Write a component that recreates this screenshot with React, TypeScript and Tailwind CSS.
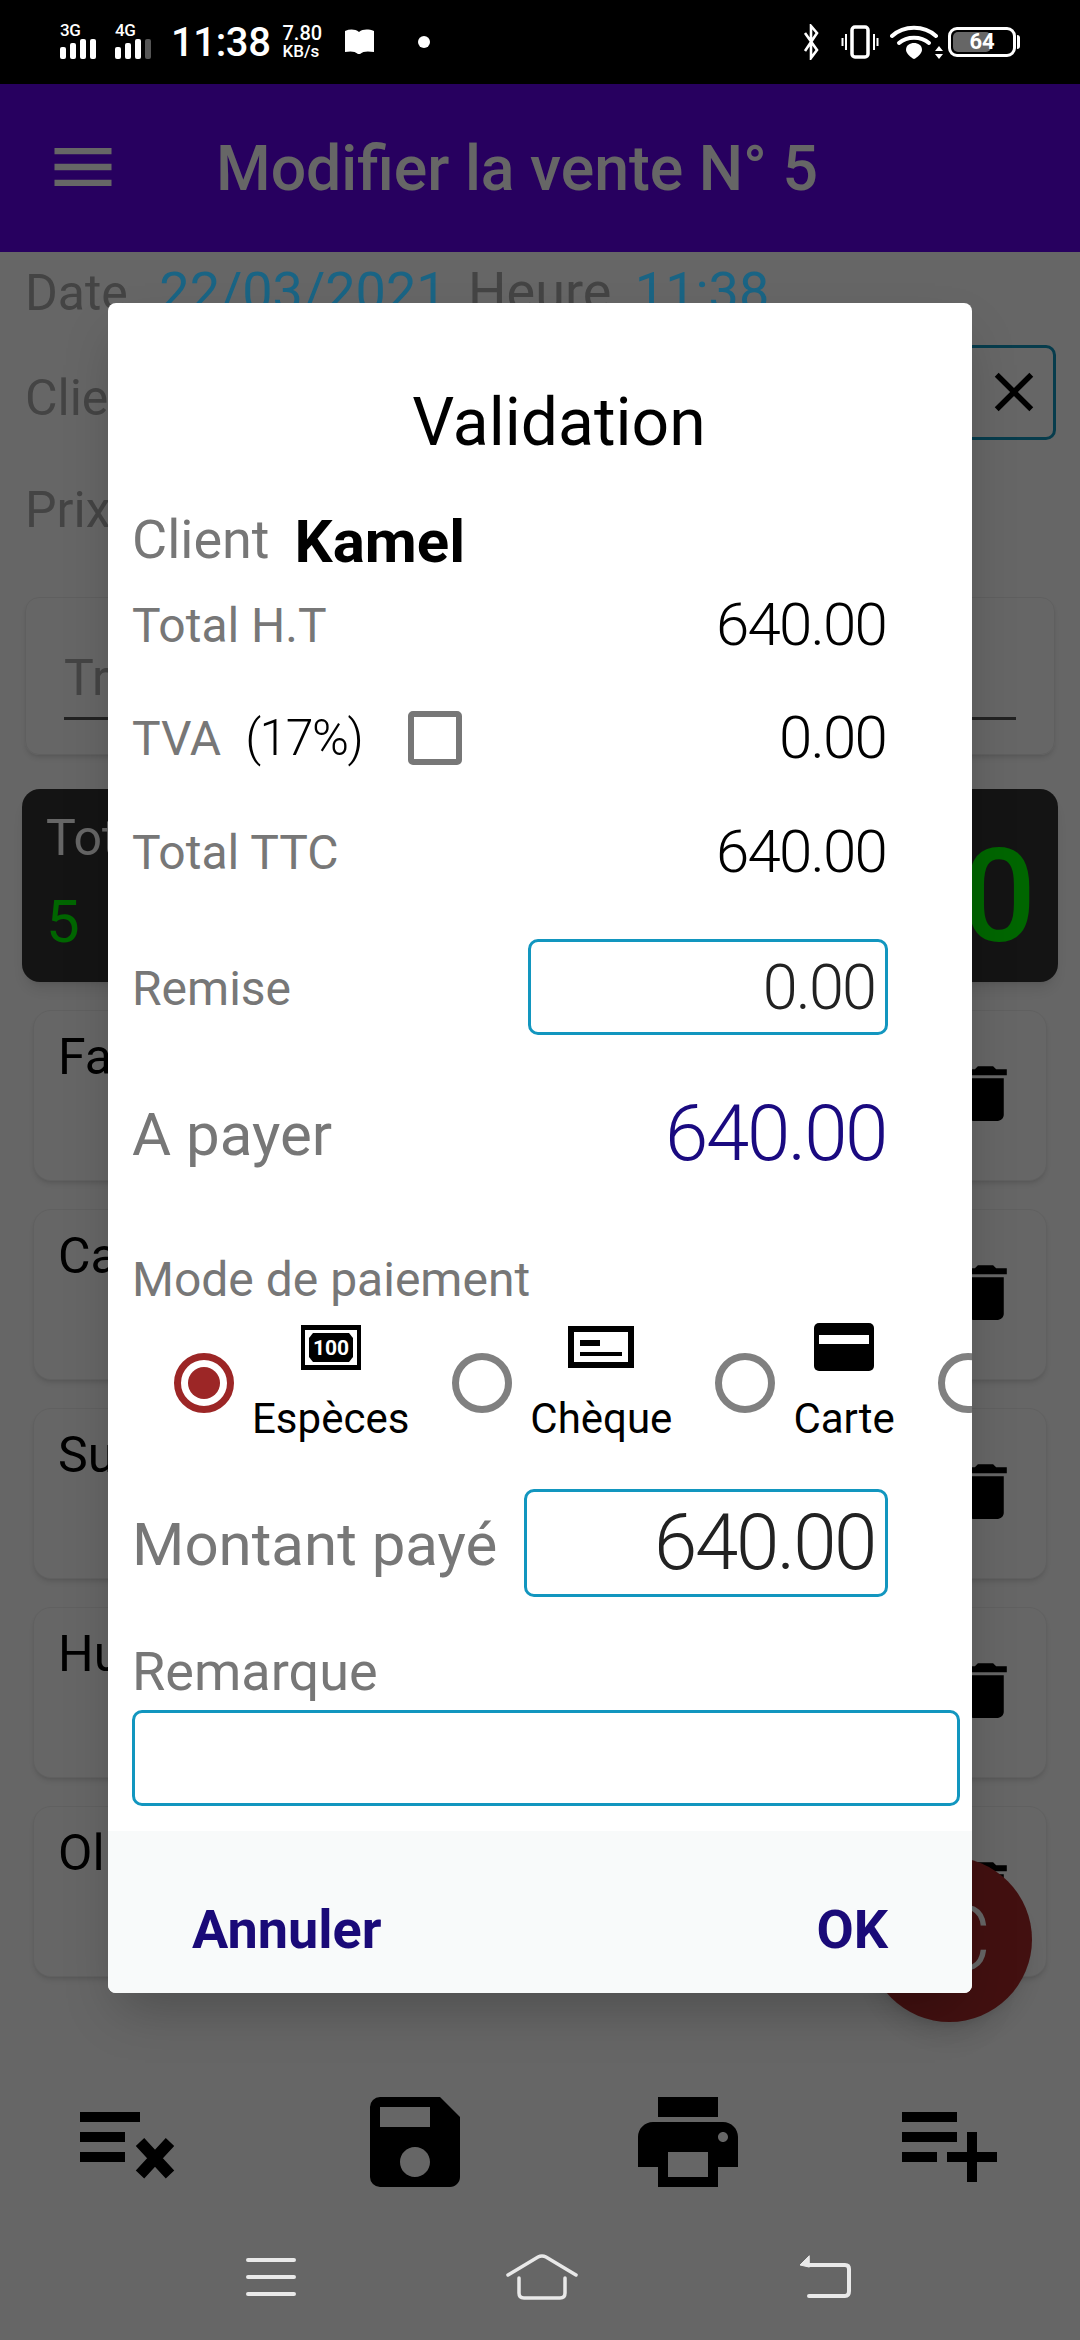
import React from "react";
import { MdDelete, MdSave, MdPrint, MdPlaylistAdd, MdClose, MdMenu } from "react-icons/md";

const font = "font-['Roboto','Liberation_Sans',sans-serif]";

function Signal({ label, last }: { label: string; last?: boolean }) {
  const hs = [12, 16, 20, 20];
  return (
    <div className="flex flex-col items-start w-[46px]">
      <span className="text-[17px] leading-[16px] font-medium text-white tracking-[-0.5px]">{label}</span>
      <div className="flex items-end gap-[4px] h-[21px]">
        {hs.map((h, i) => (
          <div key={i} style={{ height: h }} className={`w-[6px] rounded-[2px] ${last && i === 3 ? "bg-[#555]" : "bg-white"}`} />
        ))}
      </div>
    </div>
  );
}

function StatusBar() {
  return (
    <div className="relative z-[20] h-[84px] bg-black flex items-center pl-[60px] pr-[60px] text-white shrink-0">
      <div className="mt-[-4px]"><Signal label="3G" /></div>
      <div className="ml-[9px] mt-[-4px]"><Signal label="4G" last /></div>
      <span className="ml-[10px] text-[40px] leading-[38px] font-medium mt-[1px] tracking-[-0.4px]">11:38</span>
      <div className="ml-[12px] flex flex-col text-[20px] leading-[18px] font-medium">
        <span>7.80</span>
        <span className="text-[17px]">KB/s</span>
      </div>
      <svg className="ml-[22px]" width="31" height="26" viewBox="0 0 31 26">
        <path d="M1 2c5-2 10-2 14 1 4-3 9-3 15-1v21c-6-1-11-1-14 2h-2c-3-3-8-3-13-2z" fill="#fff" />
      </svg>
      <div className="ml-[43px] w-[12px] h-[12px] rounded-full bg-white" />
      <div className="ml-auto flex items-center">
        <svg width="16" height="36" viewBox="0 0 14 36" fill="none" stroke="#fff" strokeWidth="2.6">
          <path d="M1 9l12 17-6 8V2l6 7L1 27" />
        </svg>
        <svg className="ml-[22px]" width="38" height="34" viewBox="0 0 38 34" fill="none" stroke="#fff" strokeWidth="3">
          <rect x="11" y="2" width="16" height="30" rx="3" strokeWidth="3.500" />
          <path d="M5 9v16M1.500 13v8M33 9v16M36.500 13v8" strokeWidth="2" />
        </svg>
        <svg className="ml-[11px]" width="55" height="34" viewBox="0 0 55 34">
          <g fill="none" stroke="#fff" strokeWidth="4" strokeLinecap="round">
            <path d="M2 11c12-11 32-11 44 0" />
            <path d="M9 18c8-7 22-7 30 0" />
          </g>
          <path d="M24 18c4 0 8 2 8 7 0 3-5 8-8 9-3-1-8-6-8-9 0-5 4-7 8-7z" fill="#fff" />
          <path d="M49 21l4 5h-8zM49 34l4-5h-8z" fill="#fff" />
        </svg>
        <div className="ml-[3px] relative w-[68px] h-[30px] rounded-[9px] border-[3px] border-white overflow-hidden bg-black flex items-center justify-center">
          <div className="absolute left-[2px] top-[2px] bottom-[2px] w-[38px] rounded-[5px] bg-[#666]" />
          <span className="relative text-[22px] leading-[22px] font-bold">64</span>
        </div>
        <div className="ml-[1px] w-[3px] h-[14px] rounded-r bg-white" />
      </div>
    </div>
  );
}

function Header() {
  return (
    <div className="h-[168px] bg-[#6200ee] flex items-center text-white shrink-0">
      <MdMenu className="ml-[45px] w-[76px] h-[76px] mt-[-2px] shrink-0" />
      <span className="ml-[95px] text-[62.5px] font-medium leading-none mt-[2px]">Modifier la vente N° 5</span>
    </div>
  );
}

const items = ["Farine", "Café", "Sucre", "Huile", "Olives"];

function Background() {
  return (
    <div className="flex-1 bg-white flex flex-col">
      <div className="relative z-[2] h-[52px] pl-[25px] pt-[11px] text-[50px] leading-[58px] whitespace-nowrap text-[#444]">
        Date <span className="ml-[19px] text-[54px] text-[#1a6484]">22/03/2021</span>{" "}
        <span className="ml-[9px] text-[54px]">Heure</span>{" "}
        <span className="ml-[11px] text-[54px] text-[#1a6484]">11:38</span>
      </div>
      <div className="h-[176px] pl-[25px] flex items-center justify-between pr-[24px]">
        <span className="mt-[12px] text-[50px] text-[#aaaaaa]">Client</span>
        <div className="w-[120px] h-[95px] rounded-[10px] border-[3px] border-[#1296bf] flex items-center justify-end pr-[6px]">
          <MdClose className="w-[66px] h-[66px] text-black" />
        </div>
      </div>
      <div className="h-[60px] pl-[25px] flex items-center text-[50px] text-[#aaaaaa]">Prix</div>
      <div className="mx-[25px] mt-[57px] h-[158px] rounded-[14px] border border-[#eee] shadow-md px-[38px] pt-[52px]">
        <div className="border-b-[3px] border-[#555] h-[70px] text-[50px] leading-[56px] text-[#aaaaaa]">Trouver</div>
      </div>
      <div className="mx-[22px] mt-[34px] h-[193px] rounded-[18px] bg-[#333] shadow-lg flex flex-col pl-[24px] relative">
        <span className="mt-[20px] text-[50px] leading-[58px] text-white">Total</span>
        <span className="mt-[20px] text-[60px] leading-[70px] text-[#00ff00]">5</span>
        <span className="absolute right-[22px] top-[43px] text-[130px] leading-[130px] font-medium text-[#00ff00]">640.00</span>
      </div>
      <div className="mx-[33px] mt-[28px] flex flex-col gap-[28px]">
        {items.map((t) => (
          <div key={t} className="h-[171px] rounded-[18px] border border-[#f0f0f0] shadow-md bg-white pl-[24px] pr-[24px] flex justify-between">
            <span className="mt-[16px] text-[50px] leading-[60px] text-black">{t}</span>
            <MdDelete className="mt-[46px] w-[73px] h-[73px] text-black" />
          </div>
        ))}
      </div>
      <div className="mt-auto mb-[42px] flex items-center h-[120px] pl-[70px]">
        <svg className="w-[120px] h-[120px]" viewBox="0 0 24 24">
          <path d="M2 6h12v2H2zM2 10h9v2H2zM2 14h9v2H2z" fill="#000" />
          <path d="M14 12l6 6.500M20 12l-6 6.500" stroke="#000" strokeWidth="2.300" />
        </svg>
        <MdSave className="ml-[165px] w-[120px] h-[120px] text-black" />
        <MdPrint className="ml-[153px] w-[120px] h-[120px] text-black" />
        <MdPlaylistAdd className="ml-[139px] w-[120px] h-[120px] text-black" />
      </div>
    </div>
  );
}

function Nav() {
  return (
    <div className="relative z-[20] h-[96px] flex items-center pl-[246px] pb-[30px] shrink-0">
      <svg width="50" height="40" viewBox="0 0 50 40" stroke="#e9e9e9" strokeWidth="4" strokeLinecap="round">
        <path d="M2 3h46M2 20h46M2 37h46" />
      </svg>
      <svg className="ml-[210px]" width="72" height="46" viewBox="0 0 72 46" fill="none" stroke="#e9e9e9" strokeWidth="3.500" strokeLinecap="round">
        <path d="M2 21L32 3q4-2 8 0l30 18" />
        <path d="M13 24v15q0 5 5 5h36q5 0 5-5V24" />
      </svg>
      <svg className="ml-[221px]" width="52" height="44" viewBox="0 0 52 44" fill="none" stroke="#e9e9e9" strokeWidth="4" strokeLinecap="round">
        <path d="M9 10h37q4 0 4 4v22q0 5-4 5H10" />
        <path d="M10 1L1 10l9 2z" fill="#e9e9e9" strokeWidth="1" />
      </svg>
    </div>
  );
}

function Lcd({ v, size, color = "text-black" }: { v: string; size: string; color?: string }) {
  return <span className={`font-light tracking-[-0.03em] leading-none ${size} ${color}`}>{v}</span>;
}

function Row({ h, label, value, extra }: { h: string; label: string; value: string; extra?: React.ReactNode }) {
  return (
    <div className={`${h} flex items-center pl-[24px] pr-[86px] shrink-0`}>
      <span className="text-[48px] text-[#777] leading-none mt-[2px]">{label}</span>
      {extra}
      <span className="ml-auto"><Lcd v={value} size="text-[60px]" /></span>
    </div>
  );
}

function Radio({ on }: { on?: boolean }) {
  return (
    <div className={`w-[60px] h-[60px] shrink-0 rounded-full border-[7px] flex items-center justify-center ${on ? "border-[#9c2626]" : "border-[#808080]"}`}>
      {on && <div className="w-[32px] h-[32px] rounded-full bg-[#9c2626]" />}
    </div>
  );
}

function Pay({ on, label, icon }: { on?: boolean; label: string; icon: React.ReactNode }) {
  return (
    <div className="flex items-center gap-[18px] shrink-0">
      <Radio on={on} />
      <div className="flex flex-col items-center">
        <div className="h-[50px] flex items-center">{icon}</div>
        <span className="mt-[22px] text-[42px] leading-[50px] text-black">{label}</span>
      </div>
    </div>
  );
}

function Dialog() {
  return (
    <div className="absolute z-[10] left-[108px] top-[303px] w-[864px] h-[1690px] bg-white rounded-[8px] shadow-2xl overflow-hidden flex flex-col pt-[50px]">
      <div className="h-[136px] shrink-0 flex items-center justify-center text-[66px] leading-none text-black pl-[38px] pt-[4px]">Validation</div>
      <div className="h-[102px] shrink-0 flex items-center pl-[24px]">
        <span className="text-[54px] leading-none text-[#777]">Client</span>
        <span className="ml-[25px] mt-[3px] text-[60px] leading-none font-bold text-black">Kamel</span>
      </div>
      <Row h="h-[68px]" label="Total H.T" value="640.00" />
      <Row
        h="h-[158px]"
        label="TVA"
        value="0.00"
        extra={
          <>
            <span className="ml-[24px]"><Lcd v="(17%)" size="text-[50px]" /></span>
            <div className="ml-[46px] w-[54px] h-[54px] rounded-[5px] border-[6px] border-[#777]" />
          </>
        }
      />
      <Row h="h-[70px]" label="Total TTC" value="640.00" />
      <div className="h-[200px] shrink-0 flex items-center pl-[24px] pr-[84px]">
        <span className="text-[48px] leading-none text-[#777] mt-[4px]">Remise</span>
        <div className="ml-auto w-[360px] h-[96px] rounded-[10px] border-[3px] border-[#1296bf] flex items-center justify-end pr-[10px]">
          <Lcd v="0.00" size="text-[63px]" color="text-[#222]" />
        </div>
      </div>
      <div className="h-[94px] shrink-0 flex items-center pl-[24px] pr-[86px]">
        <span className="text-[60px] leading-none text-[#777] mt-[2px]">A payer</span>
        <span className="ml-auto"><Lcd v="640.00" size="text-[78px]" color="text-[#1a0a80]" /></span>
      </div>
      <div className="mt-[69px] h-[60px] shrink-0 flex items-center pl-[24px] text-[48px] leading-none text-[#777]">Mode de paiement</div>
      <div className="h-[134px] shrink-0 flex gap-[43px] pl-[66px] pt-[12px] items-center overflow-hidden">
        <Pay
          on
          label="Espèces"
          icon={
            <svg width="60" height="45" viewBox="0 0 60 45">
              <rect width="60" height="45" fill="#000" />
              <rect x="4" y="5" width="52" height="35" fill="#fff" />
              <path d="M12 8h36l4 5v19l-4 5H12l-4-5V13z" fill="#000" />
              <text x="30" y="30" textAnchor="middle" fontSize="21" fontWeight="700" fill="#fff" fontFamily="Roboto">100</text>
            </svg>
          }
        />
        <Pay
          label="Chèque"
          icon={
            <svg width="66" height="42" viewBox="0 0 66 42">
              <rect width="66" height="42" fill="#000" />
              <rect x="6" y="6" width="54" height="30" fill="#fff" />
              <rect x="12" y="14" width="20" height="6" fill="#000" />
              <rect x="12" y="26" width="42" height="4" fill="#000" />
            </svg>
          }
        />
        <Pay
          label="Carte"
          icon={
            <svg width="60" height="48" viewBox="0 0 60 48">
              <rect width="60" height="48" rx="5" fill="#000" />
              <rect x="5" y="12" width="50" height="9" fill="#fff" />
            </svg>
          }
        />
        <Radio />
      </div>
      <div className="mt-[45px] h-[108px] shrink-0 flex items-center pl-[24px] pr-[84px]">
        <span className="text-[60px] leading-none text-[#777] mt-[3px]">Montant payé</span>
        <div className="ml-auto w-[364px] h-[108px] rounded-[10px] border-[3px] border-[#1296bf] flex items-center justify-end pr-[10px]">
          <Lcd v="640.00" size="text-[78px]" color="text-[#222]" />
        </div>
      </div>
      <div className="h-[113px] shrink-0 flex items-end pl-[24px] pb-[8px] text-[54px] leading-[60px] text-[#777]">Remarque</div>
      <div className="ml-[24px] mr-[12px] h-[96px] shrink-0 rounded-[10px] border-[3px] border-[#1296bf]" />
      <div className="mt-auto h-[162px] shrink-0 bg-[#f8fafa] flex items-center justify-between pl-[84px] pr-[84px] pt-[36px] text-[54px] leading-none font-bold text-[#1a0a78]">
        <span>Annuler</span>
        <span>OK</span>
      </div>
    </div>
  );
}

export default function App() {
  return (
    <div className={`relative w-[1080px] h-[2340px] overflow-hidden flex flex-col ${font}`}>
      <StatusBar />
      <Header />
      <Background />
      <div className="absolute top-[1857px] left-[867px] z-0 w-[165px] h-[165px] rounded-full bg-[#a52a2a] shadow-xl flex items-center justify-center pl-[25px] text-white text-[90px] font-light">C</div>
      <div className="absolute inset-0 z-[1] bg-black/60" />
      <Dialog />
      <Nav />
    </div>
  );
}
